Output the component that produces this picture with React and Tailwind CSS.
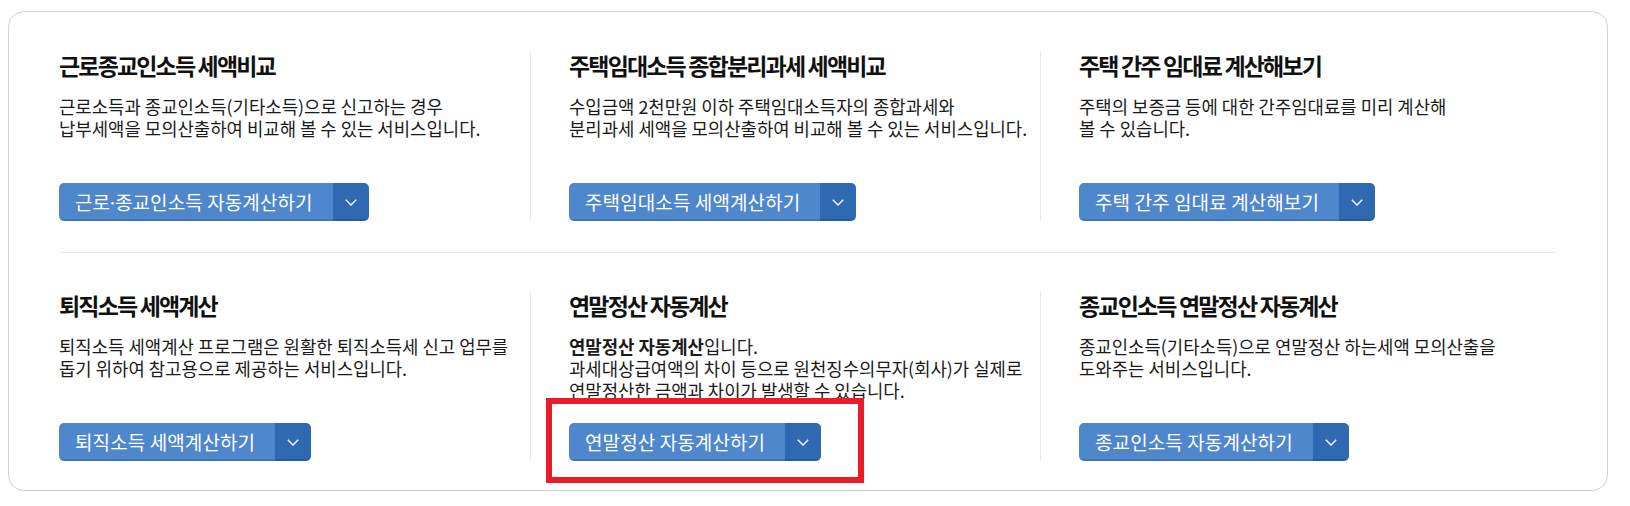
import React from 'react';

const items = [
  {
    title: '근로종교인소득 세액비교',
    desc: ['근로소득과 종교인소득(기타소득)으로 신고하는 경우', '납부세액을 모의산출하여 비교해 볼 수 있는 서비스입니다.'],
    button: <>근로<span className="-mx-[3px]">·</span>종교인소득 자동계산하기</>,
  },
  {
    title: '주택임대소득 종합분리과세 세액비교',
    desc: ['수입금액 2천만원 이하 주택임대소득자의 종합과세와', '분리과세 세액을 모의산출하여 비교해 볼 수 있는 서비스입니다.'],
    button: '주택임대소득 세액계산하기',
  },
  {
    title: '주택 간주 임대료 계산해보기',
    desc: ['주택의 보증금 등에 대한 간주임대료를 미리 계산해', '볼 수 있습니다.'],
    button: '주택 간주 임대료 계산해보기',
  },
  {
    title: '퇴직소득 세액계산',
    desc: ['퇴직소득 세액계산 프로그램은 원활한 퇴직소득세 신고 업무를', '돕기 위하여 참고용으로 제공하는 서비스입니다.'],
    button: '퇴직소득 세액계산하기',
  },
  {
    title: '연말정산 자동계산',
    desc: [
      <><b className="font-bold">연말정산 자동계산</b>입니다.</>,
      '과세대상급여액의 차이 등으로 원천징수의무자(회사)가 실제로',
      '연말정산한 금액과 차이가 발생할 수 있습니다.',
    ],
    button: '연말정산 자동계산하기',
    marked: true,
  },
  {
    title: '종교인소득 연말정산 자동계산',
    desc: ['종교인소득(기타소득)으로 연말정산 하는세액 모의산출을', '도와주는 서비스입니다.'],
    button: '종교인소득 자동계산하기',
  },
];

function Chevron() {
  return (
    <svg width="12" height="7" viewBox="0 0 12 7" fill="none" aria-hidden="true">
      <path d="M0.8 0.8L6 6L11.2 0.8" stroke="white" strokeWidth="1.3" />
    </svg>
  );
}

function CalcButton({ label, marked }) {
  return (
    <div className="relative mt-auto self-start">
      <div className="flex h-[38px] rounded-[5px] overflow-hidden">
        <span className="flex items-center bg-[#4f87cd] pl-[16px] pr-[20px] text-[19px] tracking-[0.1px] text-white whitespace-nowrap shadow-[inset_0_-2px_0_rgba(0,0,0,0.13)]">
          {label}
        </span>
        <span className="flex w-[36px] items-center justify-center bg-[#2e69b2] shadow-[inset_0_-2px_0_rgba(0,0,0,0.12)]">
          <Chevron />
        </span>
      </div>
      {marked && (
        <div className="pointer-events-none absolute left-[-23px] top-[-25px] w-[318px] h-[85px] border-[6px] border-[#ea1c28]" />
      )}
    </div>
  );
}

function Item({ item, last }) {
  return (
    <div className={`flex flex-col h-[170px] ${last ? '' : 'border-r border-[#e8eaed]'}`}>
      <h3 className="text-[23px] leading-[28px] font-bold tracking-[-0.08em] text-[#111] whitespace-nowrap">
        {item.title}
      </h3>
      <p className="mt-[16px] text-[17.8px] leading-[22px] text-[#1a1a1a] whitespace-nowrap">
        {item.desc.map((line, i) => (
          <span key={i} className="block">{line}</span>
        ))}
      </p>
      <CalcButton label={item.button} marked={item.marked} />
    </div>
  );
}

export default function App() {
  return (
    <div
      className="w-[1630px] h-[506px] bg-white pt-[11px] pl-[8px]"
      style={{ fontFamily: '"Noto Sans CJK KR", "Noto Sans", sans-serif' }}
    >
      <div className="w-[1600px] h-[480px] rounded-[16px] border border-[#c6d3de] px-[50px]">
        <div className="grid grid-cols-[472px_472px_1fr] gap-[38px] pt-[39px] pb-[31px] border-b border-[#e8eaed]">
          {items.slice(0, 3).map((it, i) => (
            <Item key={i} item={it} last={i === 2} />
          ))}
        </div>
        <div className="grid grid-cols-[472px_472px_1fr] gap-[38px] pt-[38px]">
          {items.slice(3).map((it, i) => (
            <Item key={i} item={it} last={i === 2} />
          ))}
        </div>
      </div>
    </div>
  );
}
